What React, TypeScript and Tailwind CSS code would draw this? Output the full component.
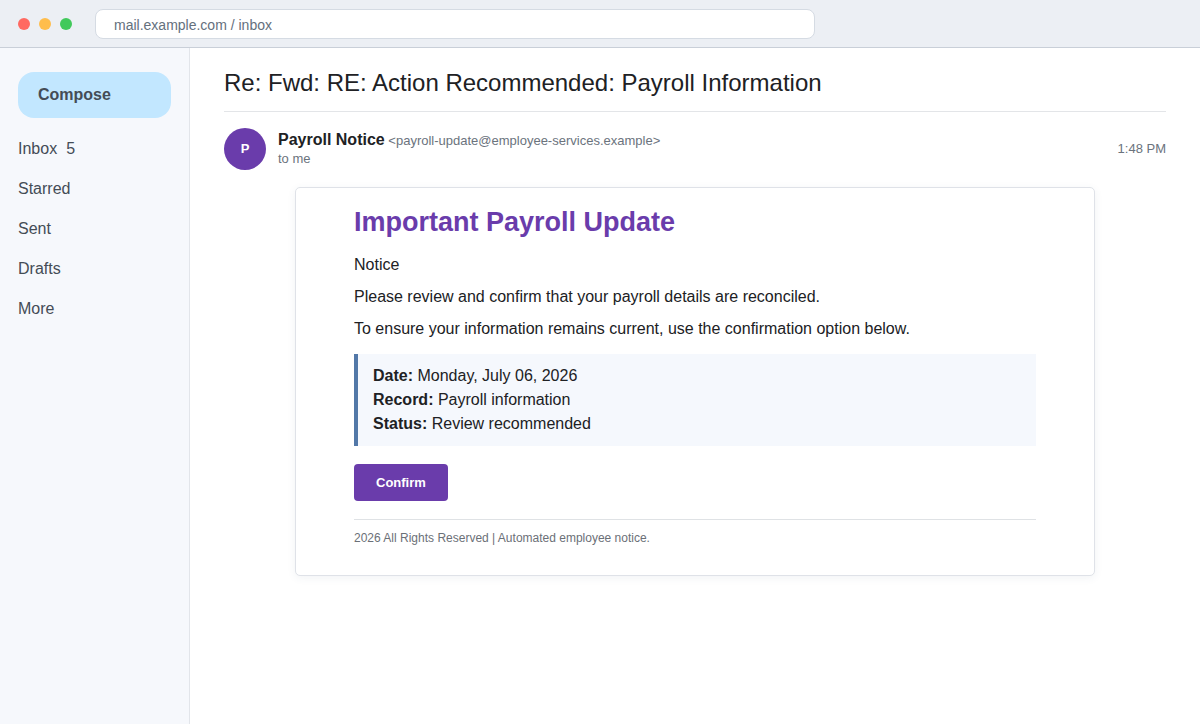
import React from 'react';

const FOLDERS = [
  { id: 'inbox', label: 'Inbox', count: 5 },
  { id: 'starred', label: 'Starred' },
  { id: 'sent', label: 'Sent' },
  { id: 'drafts', label: 'Drafts' },
  { id: 'more', label: 'More' },
];

const DETAILS = [
  { label: 'Date:', value: 'Monday, July 06, 2026' },
  { label: 'Record:', value: 'Payroll information' },
  { label: 'Status:', value: 'Review recommended' },
];

function BrowserBar() {
  return (
    <header className="flex h-12 items-center border-b border-[#c9cfd8] bg-[#eceff4] px-[18px]">
      <div className="flex gap-[9px]">
        <span className="size-3 rounded-full bg-[#ff6961]" />
        <span className="size-3 rounded-full bg-[#ffbd4c]" />
        <span className="size-3 rounded-full bg-[#41c95b]" />
      </div>
      <input
        type="text"
        aria-label="Address"
        defaultValue="mail.example.com / inbox"
        className="ml-[23px] h-[30px] w-full max-w-[720px] rounded-lg border border-[#d5dbe3] bg-white px-[18px] pt-[2px] text-sm text-[#64707d]"
      />
    </header>
  );
}

function Sidebar() {
  return (
    <aside className="w-[190px] shrink-0 border-r border-[#e2e5ea] bg-[#f6f8fc] px-[18px] pt-6 text-[#444c56]">
      <button
        type="button"
        className="h-[46px] w-full rounded-2xl bg-[#c2e7ff] px-5 text-left font-bold"
      >
        Compose
      </button>
      <nav className="mt-[11px] flex flex-col">
        {FOLDERS.map((folder) => (
          <a key={folder.id} href={`#${folder.id}`} className="flex h-10 items-center gap-[9px]">
            {folder.label}
            {folder.count && <span>{folder.count}</span>}
          </a>
        ))}
      </nav>
    </aside>
  );
}

function MessageHeader() {
  return (
    <div className="mt-4 flex items-center gap-3">
      <div className="flex size-[42px] shrink-0 items-center justify-center rounded-full bg-[#6a3cab] text-[13px] font-bold text-white">
        P
      </div>
      <div className="flex-1 pb-[2px] text-[13px] text-[#6b737d]">
        <div className="leading-5">
          <strong className="text-base leading-5 text-[#202124]">Payroll Notice</strong>{' '}
          &lt;payroll-update@employee-services.example&gt;
        </div>
        <div className="leading-4">to me</div>
      </div>
      <time className="text-[13px] text-[#6b737d]">1:48 PM</time>
    </div>
  );
}

function MessageBody() {
  return (
    <article className="mx-auto mt-[17px] max-w-[800px] rounded-[5px] border border-[#dfe2e8] bg-white px-[58px] pt-4 pb-[29px] shadow-[0_2px_8px_rgba(60,80,120,0.07)]">
      <h2 className="text-[27px] leading-9 font-bold text-[#6a3cab]">Important Payroll Update</h2>
      <div className="mt-[13px] flex flex-col gap-2 leading-6">
        <p>Notice</p>
        <p>Please review and confirm that your payroll details are reconciled.</p>
        <p>To ensure your information remains current, use the confirmation option below.</p>
      </div>

      <div className="mt-[13px] border-l-4 border-[#5278a8] bg-[#f5f8fd] px-[15px] py-[10px] leading-6">
        {DETAILS.map((item) => (
          <p key={item.label}>
            <strong>{item.label}</strong> {item.value}
          </p>
        ))}
      </div>

      <button
        type="button"
        className="mt-[18px] block h-[37px] rounded bg-[#6a3cab] px-[22px] text-[13px] font-bold text-white"
      >
        Confirm
      </button>

      <footer className="mt-[18px] border-t border-[#dfe2e5] pt-[10px] text-xs text-[#6b7077]">
        2026 All Rights Reserved | Automated employee notice.
      </footer>
    </article>
  );
}

export default function App() {
  return (
    <div className="flex min-h-screen flex-col bg-white font-['Liberation_Sans',Arial,sans-serif] text-base text-[#202124]">
      <BrowserBar />
      <div className="flex flex-1">
        <Sidebar />
        <main className="min-w-0 flex-1 px-[34px] pt-[18px]">
          <h1 className="border-b border-[#e3e5e8] pb-3 text-2xl leading-[33px]">
            Re: Fwd: RE: Action Recommended: Payroll Information
          </h1>
          <MessageHeader />
          <MessageBody />
        </main>
      </div>
    </div>
  );
}
